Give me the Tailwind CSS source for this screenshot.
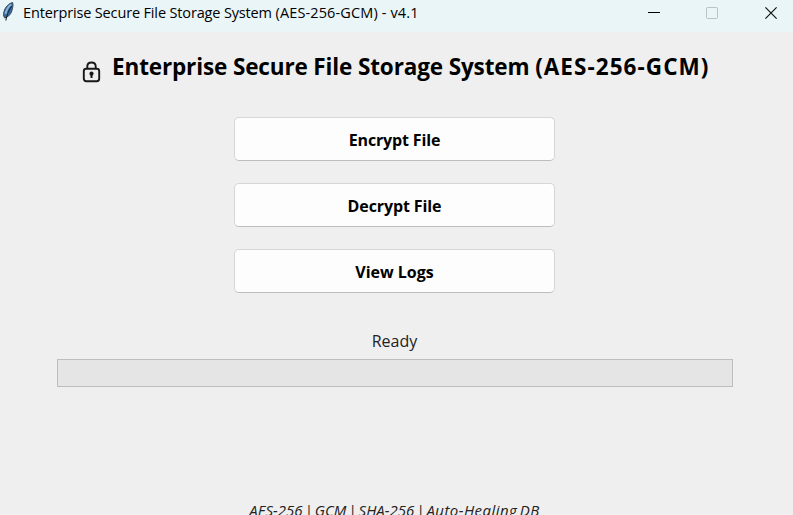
<!DOCTYPE html>
<html lang="en">
<head>
<meta charset="utf-8">
<title>Enterprise Secure File Storage System</title>
<script src="https://cdn.jsdelivr.net/npm/@tailwindcss/browser@4"></script>
</head>
<body class="h-[515px] w-[793px] overflow-hidden bg-[#efefef] font-['Open_Sans','Noto_Sans',sans-serif] text-black">
<div class="flex h-[515px] flex-col overflow-hidden">
  <header class="flex h-8 shrink-0 items-start bg-[#eaf5f8]">
    <svg class="mt-[2px] ml-[1px] h-5 w-[14px] shrink-0" viewBox="0 0 14 20">
      <path d="M11.6 .6C8 1.2 4.200 5 3 9.500C2.300 12 2.400 14 3.500 15.800C6.500 15.500 9.500 13 10.800 9C11.700 6 12.500 2.500 11.600 .6Z" fill="#3c6ea5" stroke="#3a4653" stroke-width="1"/>
      <path d="M10.300 2.500C7.300 4.500 5.300 8 4.600 12" fill="none" stroke="#80b4e0" stroke-width="2"/>
      <path d="M10.800 4C8.500 7 6 12 4.800 18.500" fill="none" stroke="#1c2430" stroke-width="1.100"/>
    </svg>
    <h1 class="ml-[8px] pt-px text-[14.5px] leading-[24px] tracking-[-0.15px] whitespace-nowrap">Enterprise Secure File Storage System <span class="tracking-[0.13px]">(AES-256-GCM) - v4.1</span></h1>
    <div class="mt-[6px] mr-[15px] ml-auto flex gap-[46px]">
      <svg class="h-[14px] w-[13px]" viewBox="0 0 13 14"><path d="M1 6.500H13" stroke="#000"/></svg>
      <svg class="h-[14px] w-[13px]" viewBox="0 0 13 14"><rect x=".5" y="1.500" width="11" height="11" rx="1" fill="none" stroke="#b9c3c6"/></svg>
      <svg class="h-[14px] w-[13px]" viewBox="0 0 13 14"><path d="M.4 1.400L11.600 12.600M11.600 1.400L.4 12.600" stroke="#111" stroke-width="1.200"/></svg>
    </div>
  </header>
  <main class="flex w-[789px] grow flex-col items-center">
    <div class="mt-[18px] flex h-[34px] w-full shrink-0 pl-[82px]">
      <svg class="mt-[11px] h-[22px] w-[20px]" viewBox="0 0 20 22" fill="none" stroke="#181818">
        <rect x="1.800" y="7.800" width="15.400" height="12.400" rx="2.400" stroke-width="1.900"/>
        <path d="M5.300 7.800V5.600C5.300 3 7 1.500 9.500 1.500S13.700 3 13.700 5.600V7.800" stroke-width="1.900"/>
        <circle cx="9.500" cy="12.700" r="2.100" fill="#181818" stroke="none"/>
        <path d="M9.500 13V17" stroke-width="2"/>
      </svg>
      <h2 class="ml-[10px] pt-[2px] text-[22.5px] leading-[30px] font-bold tracking-[-0.13px] whitespace-nowrap">Enterprise Secure File Storage System <span class="tracking-[1.05px]">(AES-256-GCM)</span></h2>
    </div>
    <div class="mt-[33px] flex flex-col gap-[22px]">
      <button class="h-[44px] w-[321px] rounded-[5px] border border-[#d6d6d6] border-b-[#bdbdbd] bg-[#fdfdfd] pt-[2px] text-[16px] font-bold tracking-[-0.15px]">Encrypt File</button>
      <button class="h-[44px] w-[321px] rounded-[5px] border border-[#d6d6d6] border-b-[#bdbdbd] bg-[#fdfdfd] pt-[2px] text-[16px] font-bold tracking-[-0.1px]">Decrypt File</button>
      <button class="h-[44px] w-[321px] rounded-[5px] border border-[#d6d6d6] border-b-[#bdbdbd] bg-[#fdfdfd] pt-[2px] text-[16px] font-bold">View Logs</button>
    </div>
    <p class="mt-[36px] text-[16px] leading-[24px] text-[#222]">Ready</p>
    <div class="mt-[6px] h-[28px] w-[676px] shrink-0 border border-[#bdbdbd] bg-[#e5e5e5]"></div>
    <p class="mt-[111px] text-[15px] leading-[24px] tracking-[-0.02px] [word-spacing:-1.8px] whitespace-nowrap text-[#222] italic">AES-256 | GCM | SHA-256 | <span class="tracking-[0.45px]">Auto-Healing DB</span></p>
  </main>
</div>
</body>
</html>
